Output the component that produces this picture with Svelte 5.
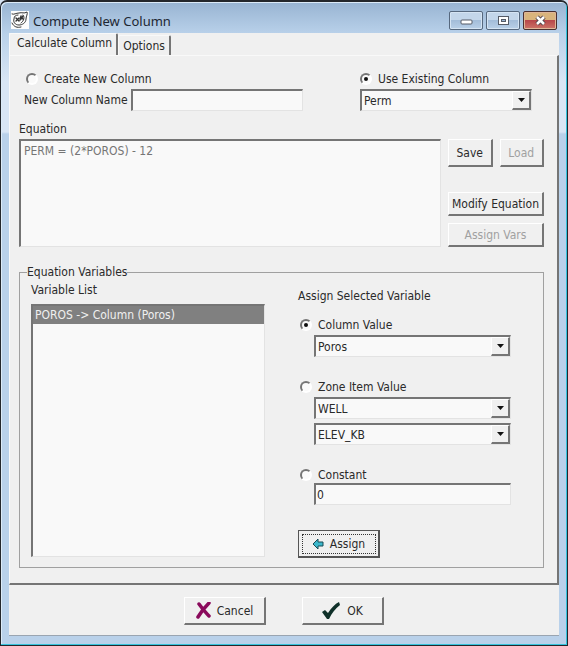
<script lang="ts">
  let source = $state('existing');
  let assignFrom = $state('column');
  let newName = $state('');
  let existing = $state('Perm');
  let equation = $state('PERM = (2*POROS) - 12');
  let column = $state('Poros');
  let zone = $state('WELL');
  let item = $state('ELEV_KB');
  let constant = $state('0');

  const variables = ['POROS -> Column (Poros)'];
  let selected = $state(0);
</script>

{#snippet arrow()}
  <span class="arrow">
    <svg width="7" height="4" viewBox="0 0 7 4"><path d="M0 0h7L3.500 4z" fill="#111" /></svg>
  </span>
{/snippet}

<div class="window">
  <header>
    <svg class="logo" width="18" height="18" viewBox="0 0 18 18">
      <rect width="18" height="18" fill="#fdfdfd" />
      <g fill="none" stroke="#333" stroke-linecap="round">
        <path d="M1 3C3 4 5 2 8 2C11 1 13 3 16 1C17 3 15 5 15 8C15 12 11 14 8 14C4 14 2 11 3 8C3 5 5 4 7 4" />
        <path d="M1 12C3 16 6 17 10 16M12 4C14 6 13 10 10 12" />
        <path d="M5 7l3 3M5 10l3-3M10 5l-1 4M10 6l2 2M12 5l-2 3" stroke-width="1.400" />
      </g>
    </svg>
    <h1>Compute New Column</h1>
    <div class="controls">
      <button aria-label="Minimize">
        <svg width="13" height="11" viewBox="0 0 13 11">
          <rect x="1" y="5" width="11" height="4" rx="1" fill="#fff" stroke="#555b66" />
        </svg>
      </button>
      <button aria-label="Maximize">
        <svg width="13" height="11" viewBox="0 0 13 11">
          <rect x="1.500" y="1.500" width="10" height="8" fill="#fff" stroke="#555b66" />
          <rect x="4.500" y="4.500" width="4" height="2" fill="#9ab4d2" stroke="#555b66" />
        </svg>
      </button>
      <button class="close" aria-label="Close">
        <svg width="13" height="11" viewBox="0 0 13 11">
          <path d="M3 2l7 7M10 2l-7 7" stroke="#50424a" stroke-width="4.500" />
          <path d="M3 2l7 7M10 2l-7 7" stroke="#fff" stroke-width="2.500" />
        </svg>
      </button>
    </div>
  </header>

  <main>
    <div class="tabs" role="tablist">
      <button class="tab active" role="tab" aria-selected="true">Calculate Column</button>
      <button class="tab" role="tab" aria-selected="false">Options</button>
    </div>

    <div class="pane">
      <div class="target">
        <div class="create">
          <label class="radio">
            <input type="radio" value="create" bind:group={source} />Create New Column
          </label>
          <div class="name">
            <label for="new-name">New Column Name</label>
            <input id="new-name" class="field" type="text" bind:value={newName} />
          </div>
        </div>
        <div class="existing">
          <label class="radio">
            <input type="radio" value="existing" bind:group={source} />Use Existing Column
          </label>
          <div class="combo">
            <select aria-label="Existing column" bind:value={existing}>
              <option>Perm</option>
              <option>Poros</option>
            </select>
            {@render arrow()}
          </div>
        </div>
      </div>

      <label class="caption" for="equation">Equation</label>
      <div class="equation">
        <textarea id="equation" class="field" spellcheck="false" bind:value={equation}></textarea>
        <div class="actions">
          <div class="pair">
            <button class="btn">Save</button>
            <button class="btn" disabled>Load</button>
          </div>
          <button class="btn low">Modify Equation</button>
          <button class="btn low" disabled>Assign Vars</button>
        </div>
      </div>

      <fieldset>
        <legend>Equation Variables</legend>
        <div class="variables">
          <span id="list-label">Variable List</span>
          <ul class="field" role="listbox" aria-labelledby="list-label">
            {#each variables as name, i}
              <li role="option" aria-selected={i === selected}>
                <button class:selected={i === selected} onclick={() => (selected = i)}>{name}</button>
              </li>
            {/each}
          </ul>
        </div>

        <div class="assign">
          <p>Assign Selected Variable</p>

          <div class="choice">
            <label class="radio">
              <input type="radio" value="column" bind:group={assignFrom} />Column Value
            </label>
            <div class="combo">
              <select aria-label="Column value" bind:value={column}>
                <option>Poros</option>
                <option>Perm</option>
              </select>
              {@render arrow()}
            </div>
          </div>

          <div class="choice">
            <label class="radio">
              <input type="radio" value="zone" bind:group={assignFrom} />Zone Item Value
            </label>
            <div class="combo">
              <select aria-label="Zone" bind:value={zone}>
                <option>WELL</option>
              </select>
              {@render arrow()}
            </div>
            <div class="combo">
              <select aria-label="Zone item" bind:value={item}>
                <option>ELEV_KB</option>
              </select>
              {@render arrow()}
            </div>
          </div>

          <div class="choice">
            <label class="radio">
              <input type="radio" value="constant" bind:group={assignFrom} />Constant
            </label>
            <input class="field" type="text" aria-label="Constant value" bind:value={constant} />
          </div>

          <button class="btn wide default">
            <svg width="12" height="12" viewBox="0 0 12 12">
              <path d="M1 6L6 1v3h5v4H6v3z" fill="#3cb8cc" stroke="#174a55" />
            </svg>
            Assign
          </button>
        </div>
      </fieldset>
    </div>

    <footer>
      <button class="btn wide">
        <svg width="15" height="17" viewBox="0 0 15 17">
          <path d="M3 2C6 6 9 10 13 14M13 1C9 5 5 10 2 15" fill="none" stroke="#8a0a5c" stroke-width="3.500" stroke-linecap="round" />
        </svg>
        Cancel
      </button>
      <button class="btn wide">
        <svg width="19" height="17" viewBox="0 0 19 17">
          <path d="M0 10l3-2 3 3C9 6 13 2 17 0l1 3C13 7 10 11 7 17H5z" fill="#0f3029" />
        </svg>
        OK
      </button>
    </footer>
  </main>
</div>

<style>
  :global(body) {
    margin: 0;
    background: #d5e2f2;
  }

  .window {
    box-sizing: border-box;
    min-height: 100vh;
    padding: 0 8px 8px;
    border: 1px solid #24272c;
    border-top-width: 2px;
    border-radius: 7px 7px 0 0;
    background: linear-gradient(#98b4d2, #b9d1ea 32px, #d9e6f5 80px, #d9e6f5 130px, #b9d1ea 132px);
    box-shadow: inset -1px -1px #35c3dc, inset 1px 1px #dcebf8;
    font-family: 'DejaVu Sans Condensed', 'DejaVu Sans', sans-serif;
    font-size: 12px;
    line-height: 16px;
    color: #2a2a2a;
  }

  button,
  input,
  select,
  textarea {
    box-sizing: border-box;
    margin: 0;
    font: inherit;
    color: inherit;
  }

  header {
    display: flex;
    align-items: center;
    height: 31px;
    padding-left: 2px;
  }

  .logo {
    margin-top: 4px;
  }

  h1 {
    flex: 1;
    margin: 6px 0 0 4px;
    font-family: 'Noto Sans', sans-serif;
    font-size: 13px;
    font-weight: normal;
    line-height: 20px;
    color: #1d2733;
  }

  .controls {
    display: flex;
    gap: 3px;
    margin: 5px 2px 0 0;
  }

  .controls button {
    display: flex;
    align-items: center;
    justify-content: center;
    width: 34px;
    height: 19px;
    padding: 0;
    border: 1px solid #56687e;
    border-radius: 2px;
    background: linear-gradient(#c3d6ea 45%, #a3bdd9 50%, #b9d0e8);
    box-shadow: inset 0 0 0 1px #d5e4f3;
  }

  .controls .close {
    border-color: #4a3030;
    background: linear-gradient(#d9b47c 45%, #b8474a 50%, #cc7468);
    box-shadow: inset 0 0 0 1px #dfb698;
  }

  main {
    border-bottom: 1px solid #9aa5b1;
    background: #f0f0f0;
  }

  .tabs {
    display: flex;
    align-items: flex-end;
    height: 22px;
  }

  .tab {
    height: 20px;
    padding: 0 4px;
    border: 1px solid #f9f9f9;
    border-right: 2px solid #757575;
    border-bottom: 0;
    border-radius: 2px 2px 0 0;
    background: #f0f0f0;
  }

  .tab.active {
    height: 22px;
    padding: 0 4px 4px 7px;
  }

  .pane {
    padding: 15px 13px 15px 9px;
    border: 1px solid #f9f9f9;
    border-right: 2px solid #757575;
    border-bottom: 2px solid #757575;
  }

  .target {
    display: flex;
    gap: 57px;
    padding-right: 12px;
  }

  .create {
    flex: 1;
  }

  .existing {
    width: 172px;
  }

  .radio {
    display: flex;
    align-items: center;
    gap: 6px;
  }

  .create .radio {
    padding-left: 7px;
  }

  .radio input {
    display: grid;
    place-items: center;
    width: 12px;
    height: 12px;
    appearance: none;
    border: 2px solid;
    border-color: #757575 #fff #fff #757575;
    border-radius: 50%;
    background: #fafafa;
  }

  .radio input:checked::before {
    content: '';
    width: 4px;
    height: 4px;
    border-radius: 50%;
    background: #111;
  }

  .name {
    display: flex;
    align-items: center;
    justify-content: space-between;
    padding-left: 5px;
    margin-top: 2px;
  }

  .name .field {
    width: 172px;
  }

  .field,
  select {
    border: 1px solid #e3e3e3;
    border-top: 2px solid #757575;
    border-left: 2px solid #757575;
    border-radius: 0;
    background: #f9f9f9;
  }

  input.field {
    height: 22px;
    padding: 0 1px;
  }

  .combo {
    position: relative;
    height: 22px;
    margin-top: 2px;
  }

  .combo + .combo {
    margin-top: 4px;
  }

  select {
    width: 100%;
    height: 22px;
    padding: 0 20px 0 2px;
    appearance: none;
  }

  .arrow {
    position: absolute;
    top: 2px;
    right: 1px;
    bottom: 1px;
    display: flex;
    align-items: center;
    justify-content: center;
    width: 16px;
    border: 1px solid #fff;
    border-right: 2px solid #757575;
    border-bottom: 2px solid #757575;
    background: #f0f0f0;
    pointer-events: none;
  }

  .caption {
    display: block;
    margin: 10px 0 2px;
  }

  .equation {
    display: flex;
    gap: 7px;
  }

  textarea {
    flex: 1;
    min-width: 0;
    height: 108px;
    padding: 2px 3px;
    resize: none;
  }

  textarea.field {
    color: #757575;
  }

  .actions {
    display: flex;
    flex-direction: column;
    gap: 7px;
    width: 96px;
  }

  .pair {
    display: flex;
    gap: 7px;
    margin-bottom: 18px;
  }

  .pair .btn {
    flex: 1;
  }

  .btn {
    display: flex;
    align-items: center;
    justify-content: center;
    height: 28px;
    padding: 0;
    border: 1px solid #fff;
    border-right: 2px solid #757575;
    border-bottom: 2px solid #757575;
    background: #f0f0f0;
    white-space: nowrap;
  }

  .btn:disabled {
    color: #a0a0a0;
  }

  .btn.low {
    height: 24px;
  }

  .btn.wide {
    gap: 6px;
    width: 82px;
  }

  .btn.default {
    border: 1px solid #555;
    border-right-width: 2px;
    border-bottom-width: 2px;
    outline: 1px dotted #333;
    outline-offset: -5px;
  }

  fieldset {
    display: flex;
    gap: 33px;
    min-width: 0;
    margin: 17px 0 0;
    padding: 2px 32px 9px 11px;
    border: 1px solid #a0a0a0;
  }

  legend {
    margin-left: -4px;
    padding: 0;
  }

  .variables {
    flex: 1;
    min-width: 0;
  }

  ul {
    height: 250px;
    margin: 6px 0 0;
    padding: 0;
    list-style: none;
  }

  li button {
    display: block;
    width: 100%;
    height: 18px;
    padding: 0 2px;
    border: 0;
    background: none;
    text-align: left;
  }

  li .selected {
    background: #808080;
    color: #f0f0f0;
  }

  .assign {
    width: 213px;
  }

  p {
    margin: 6px 0 13px;
  }

  .choice {
    margin-bottom: 22px;
    padding-left: 16px;
  }

  .choice .radio {
    margin-left: -14px;
  }

  .choice .field {
    width: 100%;
  }

  .assign .btn {
    margin-top: 25px;
  }

  footer {
    display: flex;
    justify-content: center;
    gap: 36px;
    padding: 12px 0 10px;
  }
</style>
